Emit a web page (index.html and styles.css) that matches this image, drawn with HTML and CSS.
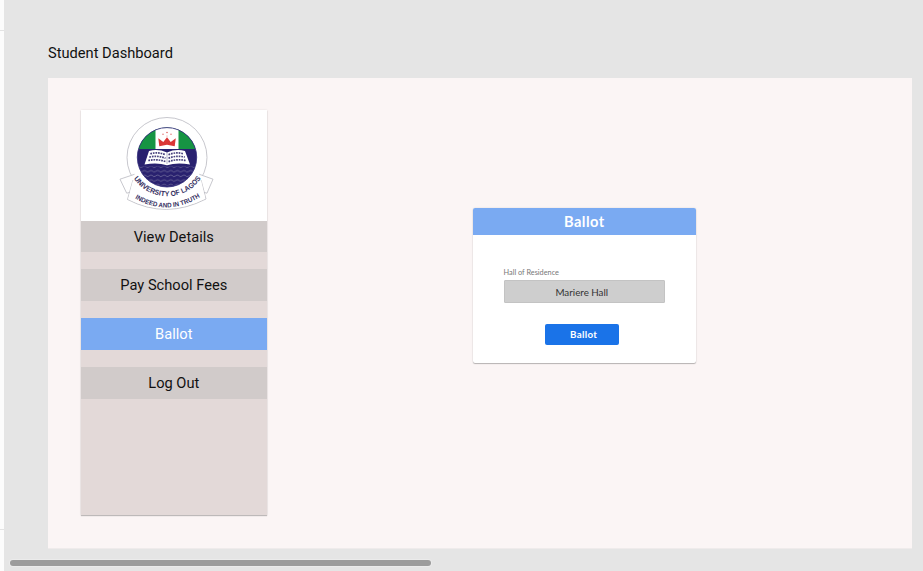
FILE: index.html
```
<!DOCTYPE html>
<html lang="en">
<head>
<meta charset="utf-8">
<title>Student Dashboard</title>
<link rel="stylesheet" href="styles.css">
</head>
<body>
<div class="gutter"></div>
<main class="canvas">
  <h1 class="title">Student Dashboard</h1>
  <section class="frame">
    <aside class="sidebar">
      <div class="logo">
        <svg width="105" height="105" viewBox="115 112 105 105" role="img" aria-label="University of Lagos">
          <defs>
            <clipPath id="disc"><circle cx="167" cy="157.3" r="29.7"/></clipPath>
            <pattern id="waves" x="139" y="165" width="6.6" height="4.6" patternUnits="userSpaceOnUse">
              <path d="M0 1.2Q1.600 3.400 3.300 1.900T6.600 1.200" fill="none" stroke="#77739f" stroke-width=".7"/>
            </pattern>
            <path id="arc-name" d="M133.800 178.500A40.500 40.500 0 0 0 201.500 177.500"/>
            <path id="arc-motto" d="M135 198.300Q166 217 199 197.800"/>
          </defs>
          <circle class="ring" cx="167" cy="157.5" r="40"/>
          <path class="ribbon" d="M134.500 174.300L120 179.200L126.700 193.200L133 191.500M199.300 174.300L213 179.200L207 193.200L200.500 191.500M133 180L127.500 199.500Q166 219.500 206 199L201 180"/>
          <path d="M133 180Q166 213 201 180L205.300 198.600Q166 218.500 128.200 199Z" fill="#fff"/>
          <g clip-path="url(#disc)">
            <path fill="#29216f" d="M137 127h60v61h-60z"/>
            <path fill="#169443" d="M137 127h60v22h-60z"/>
            <path fill="#fff" d="M155.500 127h23v22h-23z"/>
            <path fill="url(#waves)" d="M139 166.500h56v19h-56z"/>
          </g>
          <circle cx="167" cy="157.300" r="29.700" fill="none" stroke="#302b78" stroke-width=".8"/>
          <path fill="#da3636" d="M159.300 146.300L158.300 138.300L163.300 142L167 137.300L170.700 142L175.800 138.300L174.700 146.300L167 144.800Z"/>
          <g fill="#df6666"><circle cx="167" cy="132.500" r=".8"/><circle cx="163" cy="134.300" r=".7"/><circle cx="171" cy="134.300" r=".7"/><circle cx="167" cy="136" r=".5"/></g>
          <path fill="#fff" d="M149 151Q158 148.500 167 152.500Q176 148.500 185 151L190 164.500Q177 162 167 165.200Q157 162 144.500 164.500Z"/>
          <g class="book-lines">
            <path d="M150.300 153.800Q158 151.600 165.500 154.800M149.300 157.100Q157.500 155.100 165.500 158.200M148.300 160.500Q157 158.600 165.500 161.600M168.500 154.800Q176 151.600 183.700 153.800M168.500 158.200Q176.500 155.100 184.700 157.100M168.500 161.600Q177 158.600 185.700 160.500"/>
          </g>
          <path d="M167 152v12" stroke="#6b6696" stroke-width=".5"/>
          <text class="seal-name"><textPath href="#arc-name" textLength="79" lengthAdjust="spacingAndGlyphs">UNIVERSITY OF LAGOS</textPath></text>
          <text class="seal-motto"><textPath href="#arc-motto" textLength="69" lengthAdjust="spacingAndGlyphs">INDEED AND IN TRUTH</textPath></text>
        </svg>
      </div>
      <nav class="menu">
        <a class="item">View Details</a>
        <a class="item">Pay School Fees</a>
        <a class="item active">Ballot</a>
        <a class="item">Log Out</a>
      </nav>
    </aside>
    <form class="card">
      <h2 class="card-head">Ballot</h2>
      <div class="card-body">
        <label class="label">Hall of Residence</label>
        <div class="field">Mariere Hall</div>
        <button class="submit" type="button">Ballot</button>
      </div>
    </form>
  </section>
  <div class="scrollbar"></div>
</main>
</body>
</html>
```
FILE: styles.css
```
* { box-sizing: border-box; }
body {
  margin: 0;
  height: 571px;
  display: flex;
  overflow: hidden;
  font-family: Roboto, "Liberation Sans", sans-serif;
  background: #e5e5e5;
}
.gutter {
  width: 4px;
  flex: none;
  height: 500px;
  margin-top: 30px;
  border-top: 1px solid #e3e3e3;
  border-bottom: 1px solid #e3e3e3;
  background: #fcfcfc;
  box-shadow: 0 -30px #fcfcfc, 0 41px #fcfcfc;
}
.canvas {
  flex: 1;
  padding-left: 44px;
}
.title {
  margin: 0;
  padding-top: 43px;
  height: 78px;
  font-size: 14.65px;
  line-height: 20px;
  font-weight: 400;
  color: #111;
}
.frame {
  width: 864px;
  height: 471px;
  padding: 33px 0 0 32.6px;
  display: flex;
  align-items: flex-start;
  background: #fbf5f5;
  border-bottom: 1px solid #efebeb;
}
.sidebar {
  width: 186.4px;
  height: 405px;
  margin-top: -1px;
  background: #e3d9d8;
  box-shadow: 0 1px 1px rgba(0, 0, 0, .22), 0 0 2px rgba(0, 0, 0, .1);
}
.logo {
  height: 110.6px;
  padding: 2px 0 0 34.4px;
  background: #fff;
}
.logo svg { display: block; }
.ring, .ribbon { fill: #fff; stroke: #b9b9c0; stroke-width: .8; }
.book-lines { fill: none; stroke: #48427e; stroke-width: 1.7; stroke-dasharray: 1.7 .9; }
.seal-name, .seal-motto { font-family: "Liberation Sans", sans-serif; font-weight: 700; fill: #35305f; }
.seal-name { font-size: 7.2px; }
.seal-motto { font-size: 6.6px; }
.menu {
  display: flex;
  flex-direction: column;
  gap: 16.8px;
}
.item {
  height: 31.9px;
  text-align: center;
  font-size: 14.65px;
  line-height: 33px;
  color: #111;
  background: #d1cbca;
}
.active { background: #7aaaf2; color: #fff; }
.card {
  width: 223.4px;
  height: 155.4px;
  margin: 96.7px 0 0 205.6px;
  border-radius: 2px;
  overflow: hidden;
  font-family: Lato, sans-serif;
  background: #fff;
  box-shadow: 0 1px 1px rgba(0, 0, 0, .25), 0 0 2px rgba(0, 0, 0, .13);
}
.card-head {
  margin: 0;
  height: 27.3px;
  font-size: 14.65px;
  line-height: 28px;
  letter-spacing: .45px;
  text-align: center;
  color: #fff;
  background: #7aaaf2;
}
.card-body {
  padding: 31px 31px 0;
  display: flex;
  flex-direction: column;
}
.label {
  font-size: 7.33px;
  line-height: 13px;
  color: #777;
}
.field {
  height: 23px;
  margin-top: 1px;
  padding-right: 5px;
  border: 1px solid #c3c3c3;
  border-radius: 1px;
  text-align: center;
  font-size: 9.78px;
  line-height: 23px;
  color: #333;
  background: #cecece;
}
.submit {
  width: 74px;
  height: 21px;
  margin: 21px 0 0 41.6px;
  padding: 0 0 0 3px;
  border: 0;
  border-radius: 2px;
  font: 700 9.78px/21px Lato, sans-serif;
  letter-spacing: .3px;
  color: #fff;
  background: #1a73e8;
}
.scrollbar {
  width: 421px;
  height: 6px;
  margin: 11px 0 0 -38px;
  border-radius: 3px;
  background: #9c9c9c;
  box-shadow: 0 0 0 1px #ebebeb;
}
```
